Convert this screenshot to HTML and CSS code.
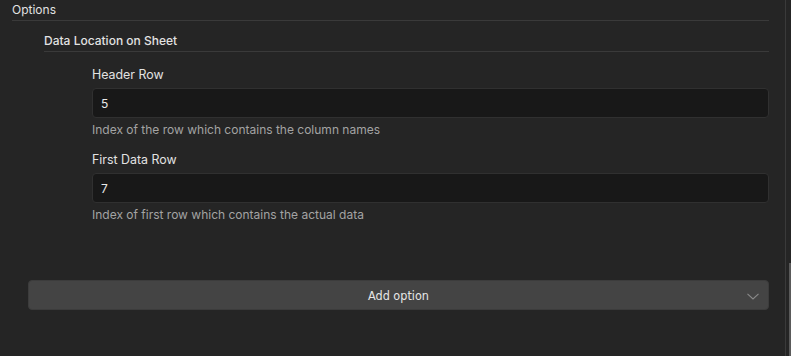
FILE: index.html
```html
<!DOCTYPE html>
<html lang="en">
<head>
    <meta charset="UTF-8">
    <title>Options</title>
    <link rel="stylesheet" href="styles.css">
</head>
<body>

    <div class="pane">
        <div class="section">
            <div class="section-title">Options</div>

            <div class="subsection">
                <div class="subsection-title">Data Location on Sheet</div>

                <div class="fields">
                    <div class="field">
                        <label class="field-label">Header Row</label>
                        <input class="field-input" type="text" value="5">
                        <div class="field-help">Index of the row which contains the column names</div>
                    </div>
                    <div class="field">
                        <label class="field-label">First Data Row</label>
                        <input class="field-input" type="text" value="7">
                        <div class="field-help">Index of first row which contains the actual data</div>
                    </div>
                </div>
            </div>

            <button class="add-option">
                <span>Add option</span>
                <svg class="chevron" width="12" height="7" viewBox="0 0 12 7">
                    <path d="M0.5 0.8 L6 6 L11.5 0.8" fill="none" stroke="#8a8a8a" stroke-width="1.1"/>
                </svg>
            </button>

            <div class="footer-link">Load Sheet</div>
        </div>
    </div>

    <!-- scrollbar -->
    <div class="scroll-track"></div>
    <div class="scroll-thumb"></div>

</body>
</html>
```

FILE: styles.css
```css
/* Basis */
body {
    margin: 0;
    height: 356px;
    overflow: hidden;
    background: #252525;
    color: #e2e2e2;
    font-family: Inter, "Noto Sans", sans-serif;
    font-size: 12px;
    position: relative;
}

.pane {
    width: 785px;
    height: 356px;
    box-sizing: border-box;
    padding: 0 16px 0 12px;
}

/* Sektioner */
.section-title {
    line-height: 18px;
    padding: 1px 0 1px;
    border-bottom: 1px solid #3a3a3a;
}

.subsection {
    margin-left: 32px;
}

.subsection-title {
    font-weight: 500;
    line-height: 18px;
    padding: 11px 0 1px;
    border-bottom: 1px solid #3a3a3a;
}

/* Felter */
.fields {
    margin-left: 48px;
    padding-top: 15px;
}

.field {
    display: flex;
    flex-direction: column;
    margin-bottom: 14px;
}

.field-label {
    font-size: 12.4px;
    line-height: 16px;
    margin-bottom: 5px;
}

.field-input {
    height: 30px;
    box-sizing: border-box;
    background: #181818;
    border: 1px solid #303030;
    border-radius: 4px;
    color: #e8e8e8;
    font-family: inherit;
    font-size: 12px;
    padding: 0 8px;
    outline: none;
}

.field-help {
    font-size: 12px;
    line-height: 16px;
    color: #a3a3a3;
    margin-top: 4px;
}

/* Add option knap */
.add-option {
    display: flex;
    align-items: center;
    justify-content: center;
    position: relative;
    width: calc(100% - 16px);
    height: 30px;
    margin: 57px 0 0 16px;
    background: #444;
    border: 1px solid #3c3c3c;
    border-radius: 4px;
    color: #e6e6e6;
    font-family: "DejaVu Sans Condensed", "DejaVu Sans", sans-serif;
    font-size: 12.5px;
    padding: 0;
}

.add-option .chevron {
    position: absolute;
    right: 9px;
    top: 12px;
}

.footer-link {
    margin-top: 44px;
    padding-left: 304px;
    font-size: 12px;
    line-height: 16px;
    color: #9a9a9a;
}

/* Scrollbar */
.scroll-track {
    position: absolute;
    top: 0;
    left: 785px;
    width: 1px;
    height: 356px;
    background: #3a3a3a;
}

.scroll-thumb {
    position: absolute;
    top: 263px;
    left: 789px;
    width: 2px;
    height: 93px;
    background: #5a5a5a;
}
```
